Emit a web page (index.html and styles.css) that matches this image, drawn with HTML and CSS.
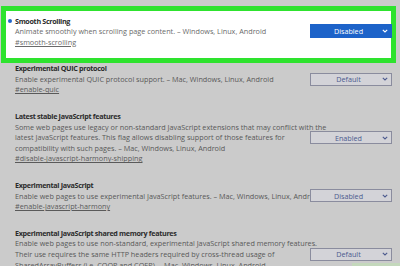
FILE: index.html
```html
<!DOCTYPE html>
<html>
<head>
<meta charset="utf-8">
<link rel="stylesheet" href="styles.css">
</head>
<body>
<div class="list">
  <div class="flag active">
    <div class="text">
      <div class="title"><span class="dot"></span>Smooth Scrolling</div>
      <div class="desc">Animate smoothly when scrolling page content. – Windows, Linux, Android</div>
      <a class="link">#smooth-scrolling</a>
    </div>
    <div class="select blue"><span class="label">Disabled</span><svg class="chev" width="6" height="4" viewBox="0 0 6 4"><path d="M0.8 0.8 L3 3 L5.2 0.8" fill="none" stroke="currentColor" stroke-width="1.1"/></svg></div>
  </div>
  <div class="flag">
    <div class="text">
      <div class="title">Experimental QUIC protocol</div>
      <div class="desc">Enable experimental QUIC protocol support. – Mac, Windows, Linux, Android</div>
      <a class="link">#enable-quic</a>
    </div>
    <div class="select"><span class="label">Default</span><svg class="chev" width="6" height="4" viewBox="0 0 6 4"><path d="M0.8 0.8 L3 3 L5.2 0.8" fill="none" stroke="currentColor" stroke-width="1.1"/></svg></div>
  </div>
  <div class="flag">
    <div class="text">
      <div class="title">Latest stable JavaScript features</div>
      <div class="desc">Some web pages use legacy or non-standard JavaScript extensions that may conflict with the<br>latest JavaScript features. This flag allows disabling support of those features for<br>compatibility with such pages. – Mac, Windows, Linux, Android</div>
      <a class="link">#disable-javascript-harmony-shipping</a>
    </div>
    <div class="select"><span class="label">Enabled</span><svg class="chev" width="6" height="4" viewBox="0 0 6 4"><path d="M0.8 0.8 L3 3 L5.2 0.8" fill="none" stroke="currentColor" stroke-width="1.1"/></svg></div>
  </div>
  <div class="flag">
    <div class="text">
      <div class="title">Experimental JavaScript</div>
      <div class="desc">Enable web pages to use experimental JavaScript features. – Mac, Windows, Linux, Android</div>
      <a class="link">#enable-javascript-harmony</a>
    </div>
    <div class="select"><span class="label">Disabled</span><svg class="chev" width="6" height="4" viewBox="0 0 6 4"><path d="M0.8 0.8 L3 3 L5.2 0.8" fill="none" stroke="currentColor" stroke-width="1.1"/></svg></div>
  </div>
  <div class="flag">
    <div class="text">
      <div class="title">Experimental JavaScript shared memory features</div>
      <div class="desc">Enable web pages to use non-standard, experimental JavaScript shared memory features.<br>Their use requires the same HTTP headers required by cross-thread usage of<br>SharedArrayBuffers (i.e. COOP and COEP). – Mac, Windows, Linux, Android</div>
      <a class="link">#enable-javascript-experimental-shared-memory</a>
    </div>
    <div class="select"><span class="label">Default</span><svg class="chev" width="6" height="4" viewBox="0 0 6 4"><path d="M0.8 0.8 L3 3 L5.2 0.8" fill="none" stroke="currentColor" stroke-width="1.1"/></svg></div>
  </div>
</div>
<div class="watermark"></div>
</body>
</html>
```
FILE: styles.css
```css
html, body {
  margin: 0;
  padding: 0;
  background: #cbcbcb;
  overflow: hidden;
}
body {
  font-family: "Open Sans", "Noto Sans", sans-serif;
  width: 400px;
  height: 266px;
  position: relative;
}
.list {
  padding-top: 7.5px;
}
.flag {
  display: flex;
  align-items: center;
  gap: 6px;
  padding: 8px 8px 8px 15px;
}
.flag.active {
  position: relative;
  z-index: 0;
}
.flag.active::before {
  content: "";
  position: absolute;
  left: 1px;
  right: 4px;
  top: -1.5px;
  bottom: -7.7px;
  border: 5px solid #2ee32e;
  background: #ffffff;
  z-index: -1;
}
.text {
  flex: 1;
  min-width: 0;
  white-space: nowrap;
  font-size: 7.25px;
  line-height: 10.6px;
}
.title {
  position: relative;
  font-weight: 700;
  font-size: 7.2px;
  letter-spacing: -0.33px;
  color: #2b2b2b;
}
.dot {
  position: absolute;
  left: -7px;
  top: 3.3px;
  width: 4px;
  height: 4px;
  border-radius: 50%;
  background: #2266cc;
}
.desc {
  color: #585858;
}
.active .desc, .active .link {
  color: #6a6a6a;
}
.link {
  display: block;
  color: #5a5a5a;
  text-decoration: underline;
}
.select {
  flex: none;
  width: 82px;
  height: 13px;
  box-sizing: border-box;
  border: 1px solid #8a8c9e;
  background: #d3d3d8;
  color: #4c5a8e;
  display: flex;
  align-items: center;
  font-size: 7.2px;
}
.select .label {
  flex: 1;
  text-align: center;
  padding-left: 4px;
}
.select .chev {
  margin-right: 3px;
  color: #4c5a8e;
}
.select.blue {
  background: #1d63c9;
  border-color: #1d63c9;
  color: #ffffff;
  height: 14px;
}
.select.blue .chev {
  color: #ffffff;
}
.watermark {
  position: absolute;
  right: 0;
  bottom: 0;
  width: 48px;
  height: 3px;
  background: #c4d8bc;
}
```
